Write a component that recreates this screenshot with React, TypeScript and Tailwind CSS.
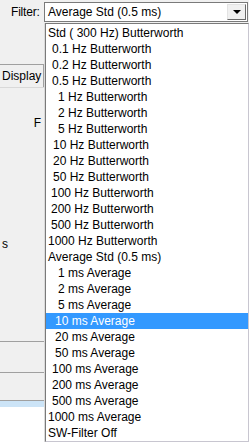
const FILTERS: { label: string; indent: string }[] = [
  { label: 'Std ( 300 Hz) Butterworth', indent: 'pl-0' },
  { label: '0.1 Hz Butterworth', indent: 'pl-[4px]' },
  { label: '0.2 Hz Butterworth', indent: 'pl-[4px]' },
  { label: '0.5 Hz Butterworth', indent: 'pl-[4px]' },
  { label: '1 Hz Butterworth', indent: 'pl-[10px]' },
  { label: '2 Hz Butterworth', indent: 'pl-[10px]' },
  { label: '5 Hz Butterworth', indent: 'pl-[10px]' },
  { label: '10 Hz Butterworth', indent: 'pl-[5px]' },
  { label: '20 Hz Butterworth', indent: 'pl-[5px]' },
  { label: '50 Hz Butterworth', indent: 'pl-[5px]' },
  { label: '100 Hz Butterworth', indent: 'pl-[3px]' },
  { label: '200 Hz Butterworth', indent: 'pl-[3px]' },
  { label: '500 Hz Butterworth', indent: 'pl-[3px]' },
  { label: '1000 Hz Butterworth', indent: 'pl-0' },
  { label: 'Average Std (0.5 ms)', indent: 'pl-0' },
  { label: '1 ms Average', indent: 'pl-[10px]' },
  { label: '2 ms Average', indent: 'pl-[10px]' },
  { label: '5 ms Average', indent: 'pl-[10px]' },
  { label: '10 ms Average', indent: 'pl-[7px]' },
  { label: '20 ms Average', indent: 'pl-[7px]' },
  { label: '50 ms Average', indent: 'pl-[7px]' },
  { label: '100 ms Average', indent: 'pl-[4px]' },
  { label: '200 ms Average', indent: 'pl-[4px]' },
  { label: '500 ms Average', indent: 'pl-[4px]' },
  { label: '1000 ms Average', indent: 'pl-0' },
  { label: 'SW-Filter Off', indent: 'pl-0' },
];

const SELECTED = '10 ms Average';

export default function App() {
  return (
    <div
      className="w-[249px] h-[442px] bg-[#f0f0f0] text-[12px] text-black overflow-hidden flex flex-col"
      style={{ fontFamily: '"Liberation Sans", Arial, sans-serif' }}
    >
      {/* filter combo */}
      <div className="flex items-start pt-[2px] h-[23px]">
        <span className="w-[44px] pl-[11px] leading-[20px] tracking-[-0.2px]">Filter:</span>
        <div className="w-[204px] h-[20px] border border-[#7a7a7a] bg-white flex items-center">
          <span className="flex-1 pl-[3px] leading-[18px]">Average Std (0.5 ms)</span>
          <div className="w-[19px] h-[16px] mr-[1px] bg-[#f0f0f0] border-t border-l border-t-[#e3e3e3] border-l-[#e3e3e3] border-b border-r border-b-[#696969] border-r-[#696969] flex items-center justify-center">
            <svg width="8" height="4" viewBox="0 0 8 4">
              <path d="M0 0h8L4 4z" fill="#000" />
            </svg>
          </div>
        </div>
      </div>

      <div className="flex flex-1">
        {/* partially hidden panel behind the dropdown */}
        <div className="w-[45px] flex flex-col border-r border-[#dadada]">
          <div className="h-[41px]" />
          <div className="h-[23px] border-t border-r border-[#a0a0a0] bg-[#f0f0f0] leading-[22px] pl-[2px]">
            Display
          </div>
          <div className="border-t border-[#d9d9d9] h-[30px]" />
          <div className="h-[13px] flex justify-end leading-[13px] pr-[3px]">F</div>
          <div className="h-[108px]" />
          <div className="h-[13px] leading-[13px] pl-[2px]">s</div>
          <div className="h-[90px]" />
          <div className="h-[31px] border-t border-[#a0a0a0]" />
          <div className="h-[28px] border-t border-[#a0a0a0]" />
          <div className="h-[7px] border-t border-[#a0a0a0] bg-[#cce4f7]" />
          <div className="flex-1 bg-white" />
        </div>

        {/* open dropdown list */}
        <div className="w-[204px] h-[419px] border border-[#7a7a7a] border-r-[#c8c6d0] border-b-[#c8c6d0] bg-white py-px">
          {FILTERS.map((f) => (
            <div
              key={f.label}
              className={
                'h-[16px] leading-[16px] pl-[2px] whitespace-pre ' +
                (f.label === SELECTED ? 'bg-[#3399ff] text-white' : '')
              }
            >
              <span className={f.indent}>{f.label}</span>
            </div>
          ))}
        </div>
      </div>
    </div>
  );
}
